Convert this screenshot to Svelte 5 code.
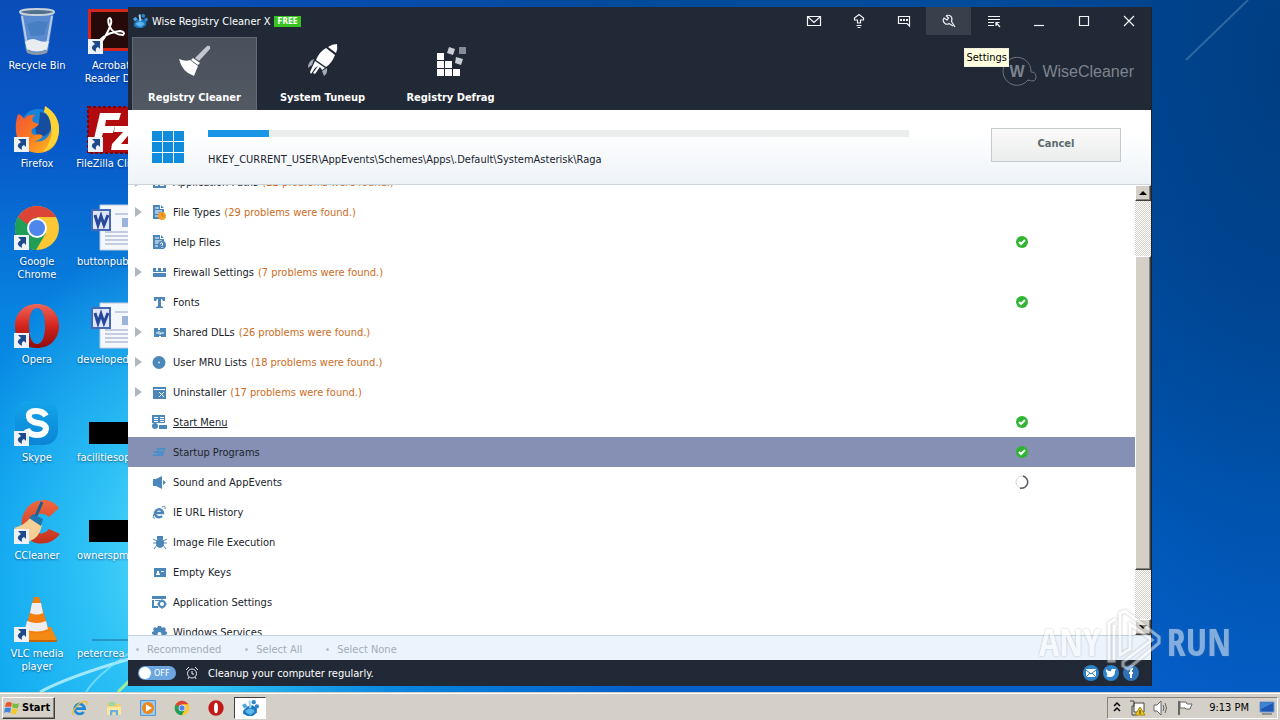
<script lang="ts">
  type Row = {
    name: string;
    icon: string;
    problems?: number;
    status?: 'ok' | 'busy';
    selected?: boolean;
    hovered?: boolean;
  };

  const desktopItems = [
    { label: 'Recycle Bin', icon: 'bin' },
    { label: 'Firefox', icon: 'firefox', shortcut: true },
    { label: 'Google Chrome', icon: 'chrome', shortcut: true },
    { label: 'Opera', icon: 'opera', shortcut: true },
    { label: 'Skype', icon: 'skype', shortcut: true },
    { label: 'CCleaner', icon: 'ccleaner', shortcut: true },
    { label: 'VLC media player', icon: 'vlc', shortcut: true },
    { label: 'Acrobat Reader DC', icon: 'acrobat', shortcut: true },
    { label: 'FileZilla Client', icon: 'filezilla', shortcut: true },
    { label: 'buttonpub', icon: 'word', file: true },
    { label: 'developed', icon: 'word', file: true },
    { label: 'facilitiesop', icon: 'black', file: true },
    { label: 'ownerspm', icon: 'black', file: true },
    { label: 'petercrea', icon: 'line', file: true },
  ];

  const tabs = [
    { label: 'Registry Cleaner', icon: 'broom' },
    { label: 'System Tuneup', icon: 'rocket' },
    { label: 'Registry Defrag', icon: 'blocks' },
  ];
  let activeTab = $state('Registry Cleaner');

  const controls = ['Mail', 'Upgrade', 'Feedback', 'Settings', 'Menu', 'Minimize', 'Maximize', 'Close'];

  const rows: Row[] = [
    { name: 'Application Paths', icon: 'paths', problems: 22 },
    { name: 'File Types', icon: 'types', problems: 29 },
    { name: 'Help Files', icon: 'help', status: 'ok' },
    { name: 'Firewall Settings', icon: 'firewall', problems: 7 },
    { name: 'Fonts', icon: 'fonts', status: 'ok' },
    { name: 'Shared DLLs', icon: 'dll', problems: 26 },
    { name: 'User MRU Lists', icon: 'mru', problems: 18 },
    { name: 'Uninstaller', icon: 'uninstall', problems: 17 },
    { name: 'Start Menu', icon: 'menu', status: 'ok', hovered: true },
    { name: 'Startup Programs', icon: 'startup', status: 'ok', selected: true },
    { name: 'Sound and AppEvents', icon: 'sound', status: 'busy' },
    { name: 'IE URL History', icon: 'ie' },
    { name: 'Image File Execution', icon: 'bug' },
    { name: 'Empty Keys', icon: 'keys' },
    { name: 'Application Settings', icon: 'app' },
    { name: 'Windows Services', icon: 'gear' },
  ];

  const currentKey = 'HKEY_CURRENT_USER\\AppEvents\\Schemes\\Apps\\.Default\\SystemAsterisk\\Raga';
  const progress = 8.7;
  let scheduled = $state(false);

  const launchers = ['Internet Explorer', 'Explorer', 'Media Player', 'Chrome', 'Opera'];
</script>

{#snippet chromeBall()}
  <circle cx="24" cy="24" r="22" fill="#fbc734" />
  <path d="M4.9 13 A22 22 0 0 0 23 46 L33 29 L15 29Z" fill="#1f9e58" />
  <path d="M4.9 13 L15 30 L24 24 V13Z" fill="#1f9e58" />
  <path d="M5 13 A22 22 0 0 1 43.1 13 H24 L14 20Z" fill="#dc4437" />
  <circle cx="24" cy="24" r="10" fill="#fff" />
  <circle cx="24" cy="24" r="8" fill="#4f86ec" />
{/snippet}

{#snippet operaRing()}
  <path
    fill-rule="evenodd"
    fill="url(#opera-red)"
    d="M24 2 C37 2 46 11 46 24 S37 46 24 46 S2 37 2 24 S11 2 24 2Z M24 6 C19 6 16 13 16 24 S19 42 24 42 S32 35 32 24 S29 6 24 6Z"
  />
{/snippet}

{#snippet wiseMark()}
  <path d="M2 11 L6 7 L11 6 L15 9 V13 L11 16 H6 L2 14Z" fill="#1f78bf" />
  <path d="M4 11 L8 9 L12 10 L13 12 L9 15 L5 13Z" fill="#5cb6ec" />
  <path d="M7 2 L9 1 L10 8 L8 9Z" fill="#a9d3ee" />
  <path d="M1 6 L4 4 L6 7 L3 9Z" fill="#4aa6e2" />
  <circle cx="12" cy="3" r="2" fill="#2b86cc" />
  <circle cx="15" cy="7" r="2" fill="#2b86cc" />
{/snippet}

{#snippet desktopIcon(kind: string)}
  <svg viewBox="0 0 48 48" width="48" height="48" aria-hidden="true">
    {#if kind === 'bin'}
      <path d="M7 3 H41 L35 43 Q24 48 13 43Z" fill="#bcd3e6" fill-opacity=".45" />
      <path d="M9 8 L15 42 M39 8 L33 42" stroke="#dfe9f0" stroke-width="2" opacity=".7" />
      <path d="M12 34 Q18 29 24 32 T36 33 L34 41 Q24 46 14 41Z" fill="#e9edf0" />
      <path d="M14 16 L24 13 L35 14 L31 27 L18 28Z" fill="#2c6db4" opacity=".4" />
      <path d="M13 41 Q24 48 35 41 L34 45 Q24 49 14 45Z" fill="#8e9aa4" />
      <ellipse cx="24" cy="4" rx="17" ry="3" fill="#526f8c" stroke="#c8d2da" stroke-width="2" />
    {:else if kind === 'firefox'}
      <circle cx="25" cy="20" r="17" fill="#1783d8" />
      <path d="M27 6 Q38 8 38 22 Q34 33 24 30 L22 22 L26 17Z" fill="#164d9e" />
      <path
        d="M5 8 Q9 9 11 13 Q15 8 22 9 Q18 12 20 16 L26 18 Q23 22 19 23 Q17 28 22 29 Q27 27 30 30 Q25 36 20 35 Q33 38 38 25 Q40 14 33 1 Q46 9 46 24 Q45 47 24 47 Q5 45 3 26 Q2 16 5 8Z"
        fill="url(#fox)"
      />
      <path d="M32 0 Q47 9 46 26 Q44 41 30 46 Q41 33 38 20 Q37 9 31 6Z" fill="#ffd432" />
    {:else if kind === 'chrome'}
      {@render chromeBall()}
    {:else if kind === 'opera'}
      {@render operaRing()}
    {:else if kind === 'skype'}
      <path
        d="M14 1 H31 Q45 2 45 16 V31 Q44 44 31 45 H18 Q3 44 2 30 V14 Q3 2 14 1Z"
        fill="url(#skype-blue)"
        opacity=".9"
      />
      <path
        d="M33 16 Q30 11 23 11 Q15 11 16 17 Q17 22 25 23 Q33 24 33 29 Q32 35 24 35 Q16 35 14 29"
        fill="none"
        stroke="#fff"
        stroke-width="6"
      />
    {:else if kind === 'ccleaner'}
      <path
        d="M46 10 L36 19 Q30 13 22 18 Q14 27 22 34 Q30 38 36 31 L47 36 Q38 48 23 45 Q6 39 9 20 Q15 1 33 2 Q41 3 46 10Z"
        fill="url(#cc-red)"
      />
      <path d="M1 30 Q12 27 17 20 L29 27 Q27 40 15 44 Q9 36 1 30Z" fill="#f4cf96" />
      <path d="M16 20 L20 16 L30 21 L28 28Z" fill="#2275ac" />
      <path d="M23 18 L29 4" stroke="#1c5f92" stroke-width="3" />
    {:else if kind === 'vlc'}
      <path d="M10 31 H38 L44 44 H4Z" fill="#f28a13" />
      <path d="M4 44 H44 V46 H4Z" fill="#c4650a" />
      <path d="M21 1 H26 L36 35 Q24 40 12 35Z" fill="#f47f0e" />
      <path d="M19 7 H28 L30 17 Q24 20 17 17Z M14 25 Q24 29 33 25 L35 33 Q24 38 12 33Z" fill="#eeeef0" />
    {:else if kind === 'acrobat'}
      <path d="M1 1 H48 V43 H1Z" fill="#d3271b" />
      <path d="M4 4 H48 V40 H4Z" fill="#250a09" />
      <path
        d="M13 35 Q18 30 22 21 T23 10 Q20 10 22 17 Q26 27 36 27 Q39 24 33 23 Q21 24 13 32 Q11 35 14 34"
        fill="none"
        stroke="#fff"
        stroke-width="2"
      />
    {:else if kind === 'filezilla'}
      <path d="M1 1 H48 V47 H1Z" fill="#b10b0f" stroke="#7d0407" stroke-width="2" stroke-dasharray="3 2" />
      <path d="M13 7 H34 L32 14 H19 L18 20 H28 L26 27 H16 L13 37 H6Z" fill="#fff" />
      <path d="M28 20 H46 L45 25 L34 38 H44 L43 44 H24 L25 38 L36 26 H27Z" fill="#fff" />
    {:else if kind === 'word'}
      <path d="M11 1 H48 V46 H11Z" fill="#f4f7fb" stroke="#c1cbdb" />
      <path d="M16 28 H48 M16 32 H48 M16 36 H48 M16 40 H48 M26 10 H48" stroke="#93a3c6" />
      <path d="M33 14 H48 V23 H33Z" fill="#9cb4dc" />
      <path d="M3 6 H21 V26 H3Z" fill="#dce6f8" stroke="#4768b2" stroke-width="2" />
      <path d="M6 11 L9 21 L12 12 L15 21 L19 11" fill="none" stroke="#27489a" stroke-width="3" />
    {:else if kind === 'black'}
      <path d="M0 22 H48 V44 H0Z" fill="#000" />
    {:else}
      <path d="M3 44 H48" stroke="#1b6c95" />
    {/if}
  </svg>
{/snippet}

{#snippet tabIcon(kind: string)}
  <svg viewBox="0 0 34 34" width="34" height="34" aria-hidden="true">
    {#if kind === 'broom'}
      <path d="M29 3 Q33 2 32 6 L21 18 L17 15Z" fill="#c4c8ce" />
      <path d="M15 15 L22 20 L20 22 L13 17Z" fill="#fff" />
      <path d="M1 16 Q8 19 12 17 L20 23 L16 33 Q4 29 1 16Z" fill="#fff" />
    {:else if kind === 'rocket'}
      <path d="M31 1 Q32 6 30 10 L22 4 Q26 1 31 1Z" fill="#fff" />
      <path d="M20 5 L29 12 Q26 20 20 24 L10 17 Q13 9 20 5Z" fill="#fff" />
      <path d="M9 18 L19 25 L16 27 L14 24 L9 31 L7 30 L12 23 L9 25 L5 31 L4 29Z" fill="#fff" />
      <path d="M8 16 Q2 18 2 25 L6 22Z M21 25 Q22 30 18 33 L16 28Z" fill="#a4abb8" />
    {:else}
      <path d="M3 10 H10 V17 H3Z M3 18 H10 V25 H3Z M11 18 H18 V25 H11Z M3 26 H10 V33 H3Z M11 26 H18 V33 H11Z M19 26 H26 V33 H19Z" fill="#fff" />
      <path d="M15 4 L21 6 L19 12 L13 10Z M22 14 L29 16 L27 22 L21 20Z" fill="#c9cdd3" />
      <path d="M25 4 H32 V11 H25Z" fill="#858c98" />
    {/if}
  </svg>
{/snippet}

{#snippet controlIcon(kind: string)}
  <svg viewBox="0 0 16 16" width="16" height="16" fill="none" stroke="#f2f4f6" stroke-width="1.2" aria-hidden="true">
    {#if kind === 'Mail'}
      <path d="M1.5 3.5 H14.5 V12.5 H1.5Z M2 4 L8 9.5 L14 4" />
    {:else if kind === 'Upgrade'}
      <path d="M6.5 10 V7 H3.5 V5 L8 1.5 L12.5 5 V7 H9.5 V10Z M5.5 12.5 H10.5 M6.5 14.5 H9.5" />
    {:else if kind === 'Feedback'}
      <path d="M2.5 3.5 H13.5 V13 L11 10.5 H2.5Z" />
      <path d="M4 7 H6 M7 7 H9 M10 7 H12" stroke-width="2" />
    {:else if kind === 'Settings'}
      <path d="M5 2.5 L7.5 5 L6 7 L3 5 Q1 8 4 10.5 Q6 12 8 10.5 L12 13 M14 14 L10.5 8.5 Q12 4 8.5 2.5 Q7 2 5 2.5" />
    {:else if kind === 'Menu'}
      <path d="M2 3.5 H14 M2 6.5 H14 M2 9.5 H8 M2 12.5 H8 M14 14 L10 9.5 M10 13 V9.5 H13.5" />
    {:else if kind === 'Minimize'}
      <path d="M3 12.5 H13" />
    {:else if kind === 'Maximize'}
      <path d="M3.5 3.5 H12.5 V12.5 H3.5Z" />
    {:else}
      <path d="M3 3 L13 13 M13 3 L3 13" />
    {/if}
  </svg>
{/snippet}

{#snippet rowIcon(kind: string)}
  <svg viewBox="0 0 15 15" width="15" height="15" fill="#4b87b9" aria-hidden="true">
    {#if kind === 'paths'}
      <path d="M1 2 H14 V13 H1Z" />
      <path d="M3 9 H6 V11 H3Z M8 9 H12 V11 H8Z" fill="#fff" />
    {:else if kind === 'types' || kind === 'help'}
      <path d="M1 0 H8 V4 H12 V14 H1Z M9 0 L12 3 H9Z" />
      <path d="M3 3 H7 M3 6 H10 M3 8 H7 M3 11 H6" stroke="#fff" />
      {#if kind === 'types'}
        <circle cx="10" cy="11" r="4" fill="#f5a12c" />
        <path d="M10 8 V11 H12" stroke="#d07a10" fill="none" />
      {:else}
        <circle cx="10" cy="10" r="4" />
        <path d="M8 9 Q10 6 11 9 L10 10 V11 M10 12 V13" stroke="#fff" fill="none" />
      {/if}
    {:else if kind === 'firewall'}
      <path d="M1 3 H4 V6 H6 V3 H9 V6 H11 V3 H14 V7 H1Z M1 8 H14 V12 H1Z" />
    {:else if kind === 'fonts'}
      <path d="M2 2 H13 V6 H11 L10 4 H9 V11 L11 12 V13 H4 V12 L6 11 V4 H5 L4 6 H2Z" />
    {:else if kind === 'dll'}
      <path d="M2 3 H6 V5 H8 V3 H14 V12 H9 V11 H7 V12 H2Z" />
      <path d="M4 8 H7 V6 M8 10 V8 H12" stroke="#fff" fill="none" />
    {:else if kind === 'mru'}
      <circle cx="7" cy="7.5" r="6.5" />
      <circle cx="7" cy="7.5" r="1" fill="#d5e6f3" />
    {:else if kind === 'uninstall'}
      <path d="M1 2 H14 V14 H1Z" />
      <path d="M2 4.5 H13 M7 7 L12 12 M12 7 L7 12" stroke="#fff" />
    {:else if kind === 'menu'}
      <path d="M0 0 H13 V8 H0Z M7 10 H15 V14 H7Z" />
      <circle cx="3" cy="11" r="3" />
      <path d="M2 2.5 H6 M8 2.5 H12 M2 4.5 H6 M8 4.5 H12 M2 6.5 H6 M8 6.5 H12" stroke="#fff" />
    {:else if kind === 'startup'}
      <path d="M4 3 H14 L11 11 H0 L2 9 H5 L6 8 H1 L2 6 H6Z" fill="#4f8fc9" />
      <path d="M7 5.5 H12" stroke="#8590b4" />
    {:else if kind === 'sound'}
      <path d="M1 4 H4 L10 1 V14 L4 11 H1Z M11 5 L14 7.5 L11 10Z" />
    {:else if kind === 'ie'}
      <path d="M4 8 H11 A4 4 0 1 0 10 11" fill="none" stroke="#4b87b9" stroke-width="2.5" />
      <path d="M3 13 Q0 14 2 9 M10 2 Q14 0 13 4" fill="none" stroke="#4b87b9" />
    {:else if kind === 'bug'}
      <ellipse cx="8" cy="8" rx="4" ry="5" />
      <path d="M5 1 H11 V4 H5Z" />
      <path d="M1 4 L5 6 M15 4 L11 6 M1 8 H15 M2 14 L5 10 M14 14 L11 10" stroke="#4b87b9" fill="none" />
    {:else if kind === 'keys'}
      <path d="M2 3 H14 V12 H2Z" />
      <path d="M4 10 V9 L5 8 V6 H7 V8 L8 9 V10Z M9 6 H12 V7 H9Z" fill="#fff" />
    {:else if kind === 'app'}
      <path d="M0 1 H14 V4 H0Z M0 5 H2 V11 H6 V13 H0Z M3 5 H8 V6 H3Z" />
      <circle cx="10" cy="9" r="3" fill="none" stroke="#4b87b9" stroke-width="2" />
      <path d="M10 4 V6 M10 12 V14 M5 9 H7 M13 9 H15" stroke="#4b87b9" />
    {:else}
      <path d="M6 1 H9 L10 3 L12 2 L14 4 L13 6 L15 7 V9 L13 10 L14 12 L12 14 H3 L1 12 L2 10 L0 9 V7 L2 6 L1 4 L3 2 L5 3Z" />
      <circle cx="7.5" cy="9" r="2" fill="#fff" />
    {/if}
  </svg>
{/snippet}

<svg class="defs" width="0" height="0" aria-hidden="true">
  <defs>
    <linearGradient id="opera-red" x1="0" y1="0" x2="0" y2="1">
      <stop offset="0" stop-color="#f0665a" />
      <stop offset=".5" stop-color="#d3241c" />
      <stop offset="1" stop-color="#8f0c0c" />
    </linearGradient>
    <linearGradient id="fox" x1="0" y1="0" x2="1" y2="1">
      <stop offset="0" stop-color="#ee5040" />
      <stop offset=".5" stop-color="#fb7a1e" />
      <stop offset="1" stop-color="#ffc928" />
    </linearGradient>
    <linearGradient id="skype-blue" x1="0" y1="0" x2="0" y2="1">
      <stop offset="0" stop-color="#12a5ea" />
      <stop offset="1" stop-color="#0a80d4" />
    </linearGradient>
    <linearGradient id="cc-red" x1="0" y1="0" x2="0" y2="1">
      <stop offset="0" stop-color="#f0683f" />
      <stop offset="1" stop-color="#c4301c" />
    </linearGradient>
  </defs>
</svg>

<div class="screen">
  <main class="desktop">
    <svg class="streaks" viewBox="0 0 1280 692" preserveAspectRatio="none" fill="none" aria-hidden="true">
      <path d="M40 692 Q80 670 200 640" stroke="#bdf3ff" stroke-width="3" opacity=".8" />
      <path d="M86 692 Q100 670 150 640" stroke="#8fe6fb" stroke-width="2" opacity=".7" />
      <path d="M118 692 L134 676" stroke="#a0ee9a" stroke-width="3" />
      <path d="M1186 60 L1248 0" stroke="#6f9fc8" stroke-width="2" opacity=".4" />
    </svg>

    <ul class="shortcuts">
      {#each desktopItems as item (item.label)}
        <li class:file={item.file}>
          <span class="picture">
            {@render desktopIcon(item.icon)}
            {#if item.shortcut}
              <svg class="arrow" viewBox="0 0 15 15" width="15" height="15" aria-hidden="true">
                <path d="M0 0 H15 V15 H0Z" fill="#eef2f6" />
                <path d="M4 2 H12 V10 L10 8 Q7 9 8 13 Q0 9 7 5Z" fill="#1d4a8c" />
              </svg>
            {/if}
          </span>
          <span class="label">{item.label}</span>
        </li>
      {/each}
    </ul>

    <section class="window">
      <header class="top">
        <div class="titlebar">
          <svg viewBox="0 0 17 17" width="16" height="16" aria-hidden="true">{@render wiseMark()}</svg>
          <h1>Wise Registry Cleaner X</h1>
          <span class="free">FREE</span>
          <div class="controls">
            {#each controls as control (control)}
              <button class:hot={control === 'Settings'} aria-label={control}>
                {@render controlIcon(control)}
              </button>
            {/each}
          </div>
        </div>

        <div class="toolbar">
          <nav class="tabs">
            {#each tabs as tab (tab.label)}
              <button class:active={activeTab === tab.label} onclick={() => (activeTab = tab.label)}>
                {@render tabIcon(tab.icon)}
                <span>{tab.label}</span>
              </button>
            {/each}
          </nav>
          <div class="brand">
            <svg viewBox="0 0 36 32" width="36" height="32" fill="none" aria-hidden="true">
              <path d="M26 25 A14 14 0 1 1 29 17 Q34 17 34 22 Q34 28 26 25" stroke="#6d7480" />
            </svg>
            <b>W</b>
            <span>WiseCleaner</span>
          </div>
        </div>
        <span class="tooltip" role="tooltip">Settings</span>
      </header>

      <div class="scan">
        <svg viewBox="0 0 32 32" width="32" height="32" fill="#0f8ddc" aria-hidden="true">
          {#each [0, 11, 22] as y}
            {#each [0, 11, 22] as x}
              <rect {x} {y} width="10" height="10" />
            {/each}
          {/each}
        </svg>
        <div class="scan-info">
          <div class="track" role="progressbar" aria-label="Scan progress" aria-valuenow={progress}>
            <div class="fill" style:width="{progress}%"></div>
          </div>
          <p>{currentKey}</p>
        </div>
        <button class="cancel">Cancel</button>
      </div>

      <div class="results">
        <ul class="rows">
          {#each rows as row (row.name)}
            <li class:selected={row.selected} class:hovered={row.hovered}>
              <span class="expander" class:shown={row.problems}></span>
              {@render rowIcon(row.icon)}
              <span class="name">{row.name}</span>
              {#if row.problems}
                <span class="problems">({row.problems} problems were found.)</span>
              {/if}
              <span class="status">
                {#if row.status === 'ok'}
                  <svg viewBox="0 0 12 12" width="12" height="12" aria-label="Done">
                    <circle cx="6" cy="6" r="6" fill="#2fb52f" />
                    <path d="M3 6 L5 8 L9 4" fill="none" stroke="#fff" stroke-width="2" />
                  </svg>
                {:else if row.status === 'busy'}
                  <svg viewBox="0 0 14 14" width="14" height="14" fill="none" aria-label="Scanning">
                    <circle cx="7" cy="7" r="6" stroke="#d2d4d8" />
                    <path d="M8 1 A6 6 0 0 1 5 13" stroke="#585c66" stroke-width="1.5" />
                  </svg>
                {/if}
              </span>
            </li>
          {/each}
        </ul>
        <div class="scrollbar">
          <button aria-label="Scroll up"><span class="up"></span></button>
          <div class="rail"><div class="thumb"></div></div>
          <button aria-label="Scroll down"><span class="down"></span></button>
        </div>
      </div>

      <div class="choices">
        <button disabled>Recommended</button>
        <button disabled>Select All</button>
        <button disabled>Select None</button>
      </div>

      <footer class="bottom">
        <label class="toggle">
          <input type="checkbox" bind:checked={scheduled} aria-label="Cleanup your computer regularly" />
          <span>{scheduled ? 'ON' : 'OFF'}</span>
        </label>
        <svg viewBox="0 0 14 14" width="14" height="14" fill="none" stroke="#e8ebef" aria-hidden="true">
          <circle cx="7" cy="7.5" r="4.5" />
          <path d="M7 5 V8 H9 M1 4 L4 1 M13 4 L10 1 M3 13 L4 11 M11 13 L10 11" />
        </svg>
        <span>Cleanup your computer regularly.</span>
        <div class="social">
          <a href="#mail" aria-label="Mail">
            <svg viewBox="0 0 16 16" width="16" height="16">
              <circle cx="8" cy="8" r="8" fill="#2e82ca" />
              <path d="M3 4 H13 V12 H3Z" fill="#fff" />
              <path d="M3 5 L8 9 L13 5 M3 12 L7 8 M13 12 L9 8" stroke="#2e82ca" fill="none" />
            </svg>
          </a>
          <a href="#twitter" aria-label="Twitter">
            <svg viewBox="0 0 16 16" width="16" height="16">
              <circle cx="8" cy="8" r="8" fill="#2e82ca" />
              <path d="M3 4 Q6 7 8 6 Q8 3 11 4 L13 4 L12 6 Q12 12 7 12 Q4 12 3 11 L5 10 Q3 9 4 8 Q2 6 3 4Z" fill="#fff" />
            </svg>
          </a>
          <a href="#facebook" aria-label="Facebook">
            <svg viewBox="0 0 16 16" width="16" height="16">
              <circle cx="8" cy="8" r="8" fill="#2e72b8" />
              <path d="M10 4 H9 Q8 4 8 6 V13 M6 8 H10" stroke="#fff" stroke-width="2" fill="none" />
            </svg>
          </a>
        </div>
      </footer>
    </section>

    <div class="watermark">
      <span>ANY</span>
      <svg viewBox="0 0 56 64" width="56" height="64" fill="none" stroke="#fff" stroke-width="3" aria-hidden="true">
        <path d="M10 10 L3 14 V52 H8 V17 H10" />
        <path d="M14 18 V4 L19 2 L53 28 V34 L22 60 L17 57 V53 L46 31 L24 15 V40 L14 46Z" />
      </svg>
      <span>RUN</span>
    </div>
  </main>

  <footer class="taskbar">
    <button class="start">
      <svg viewBox="0 0 16 16" width="16" height="16" aria-hidden="true">
        <path d="M2 3 Q5 1 8 3 L7 7 Q4 6 1 7Z" fill="#e8552a" />
        <path d="M9 3 Q12 5 15 3 L14 8 Q11 9 8 7Z" fill="#7cba3c" />
        <path d="M1 8 Q4 7 7 8 L6 13 Q3 11 0 13Z" fill="#3f86dd" />
        <path d="M8 8 Q11 10 14 9 L12 14 Q9 15 7 13Z" fill="#f7c52b" />
      </svg>
      Start
    </button>
    <div class="launchers">
      {#each launchers as app (app)}
        <button aria-label={app}>
          <svg viewBox="0 0 48 48" width="16" height="16">
            {#if app === 'Internet Explorer'}
              <path d="M12 26 H38 A15 15 0 1 0 35 36" fill="none" stroke="#2088d8" stroke-width="8" />
              <path d="M7 44 Q-2 42 8 26 Q22 6 38 4 Q48 3 44 14" fill="none" stroke="#edbe2e" stroke-width="4" />
            {:else if app === 'Explorer'}
              <path d="M4 8 H20 L24 12 H44 V42 H4Z" fill="#efcf70" />
              <path d="M8 6 H28 V18 H8Z" fill="#a3d5a2" />
              <path d="M3 20 H45 V44 H3Z" fill="#f9e69f" />
              <path d="M12 30 H36 V46 H29 V37 H19 V46 H12Z" fill="#6db0e2" />
            {:else if app === 'Media Player'}
              <path d="M1 1 H47 V47 H1Z" fill="#9bcaf0" stroke="#4a90c9" stroke-width="3" />
              <circle cx="24" cy="24" r="18" fill="#f0861a" />
              <path d="M18 13 L36 24 L18 35Z" fill="#fff" />
            {:else if app === 'Chrome'}
              {@render chromeBall()}
            {:else}
              <circle cx="24" cy="24" r="23" fill="#c21a18" />
              <ellipse cx="24" cy="24" rx="6" ry="16" fill="#fff" />
            {/if}
          </svg>
        </button>
      {/each}
      <button class="running" aria-label="Wise Registry Cleaner">
        <svg viewBox="0 0 17 17" width="18" height="18">{@render wiseMark()}</svg>
      </button>
    </div>
    <div class="tray">
      <svg viewBox="0 0 8 14" width="8" height="14" fill="none" stroke="#000" stroke-width="1.5" aria-hidden="true">
        <path d="M1 5 L4 2 L7 5 M1 10 L4 7 L7 10" />
      </svg>
      <svg viewBox="0 0 16 16" width="16" height="16" aria-hidden="true">
        <path d="M5 3 H15 V12 H5Z" fill="#fff" stroke="#444" />
        <path d="M1 1 H5 V6 H3 V15 H8" fill="none" stroke="#444" />
        <path d="M11 7 L16 15 H6Z" fill="#f5cc1d" stroke="#a58400" />
        <path d="M11 10 V14" stroke="#222" />
      </svg>
      <svg viewBox="0 0 16 16" width="16" height="16" fill="none" stroke="#666" aria-hidden="true">
        <path d="M1 5 H4 L8 1 V15 L4 11 H1Z" fill="#fff" />
        <path d="M10 5 Q12 8 10 11 M12 3 Q15 8 12 13" />
      </svg>
      <svg viewBox="0 0 16 16" width="16" height="16" aria-hidden="true">
        <path d="M2 1 V15" stroke="#666" stroke-width="2" />
        <path d="M3 2 H9 L10 4 H15 L13 9 H9 L8 8 H3Z" fill="#fff" stroke="#666" />
      </svg>
      <time>9:13 PM</time>
      <svg viewBox="0 0 16 16" width="16" height="16" aria-hidden="true">
        <path d="M1 2 H15 V12 H1Z" fill="#1c58b4" stroke="#6e97cc" />
        <path d="M2 3 H14 L2 9Z" fill="#3d83d8" />
        <path d="M3 14 H13" stroke="#555" />
      </svg>
    </div>
  </footer>
</div>

<style>
  :global(body) {
    margin: 0;
  }

  .screen {
    display: flex;
    flex-direction: column;
    min-height: 100vh;
    font-family: 'DejaVu Sans Condensed', 'DejaVu Sans', sans-serif;
    font-size: 11px;
    line-height: 13px;
    color: #20242c;
  }

  .defs {
    position: absolute;
  }

  button {
    font: inherit;
    color: inherit;
    padding: 0;
    border: 0;
    background: none;
  }

  ul {
    list-style: none;
    margin: 0;
    padding: 0;
  }

  svg {
    display: block;
    flex: none;
  }

  .desktop {
    position: relative;
    flex: 1;
    overflow: hidden;
    background:
      linear-gradient(90deg, transparent 15%, #0560cc 50%, transparent 90%) 0 100% / 100% 8px no-repeat,
      linear-gradient(90deg, transparent 15%, #004a9a 50%, transparent 90%) 0 0 / 100% 7px no-repeat,
      radial-gradient(ellipse 240px 330px at 190px 560px, #5adffb 0%, rgb(52 200 247 / 80%) 45%, transparent 100%),
      linear-gradient(180deg, #0a4db8 0%, #0758c8 20%, #0783e0 45%, #079cee 75%, #0aa4ee 100%) 0 0 / 50% 100% no-repeat,
      radial-gradient(ellipse 340px 700px at 100% 10%, #003e82 0%, transparent 100%),
      linear-gradient(180deg, #004c9e 0%, #0053b0 40%, #0060c8 75%, #0560cc 100%);
  }

  .streaks {
    position: absolute;
    width: 100%;
    height: 100%;
  }

  .shortcuts {
    display: grid;
    grid-auto-flow: column;
    grid-template-rows: repeat(6, 98px) auto;
    grid-auto-columns: 74px;
    padding-top: 8px;
    width: 148px;
    position: relative;
    color: #fff;
    text-align: center;
    text-shadow: 0 1px 2px rgb(0 30 80 / 60%);
  }

  .shortcuts li {
    display: flex;
    flex-direction: column;
    align-items: center;
    gap: 3px;
  }

  .shortcuts .file {
    align-items: stretch;
    text-align: left;
    padding-left: 3px;
  }

  .file .picture {
    align-self: center;
  }

  .picture {
    position: relative;
  }

  .arrow {
    position: absolute;
    left: 1px;
    bottom: 2px;
  }

  .label {
    max-width: 70px;
  }

  .window {
    position: absolute;
    top: 7px;
    bottom: 6px;
    left: 10%;
    right: 10%;
    display: flex;
    flex-direction: column;
    background: #fff;
    border-right: 1px solid #1b2330;
    box-sizing: border-box;
  }

  .top {
    position: relative;
    background: #212936;
    color: #fff;
  }

  .titlebar {
    display: flex;
    align-items: center;
    height: 28px;
    padding-left: 4px;
    gap: 4px;
  }

  h1 {
    font: inherit;
    margin: 0;
  }

  .free {
    background: #35c51e;
    font-size: 8px;
    font-weight: bold;
    line-height: 11px;
    padding: 0 3px;
  }

  .controls {
    display: flex;
    align-self: stretch;
    margin-left: auto;
  }

  .controls button {
    display: grid;
    place-items: center;
    width: 45px;
  }

  .controls .hot {
    background: #38404c;
  }

  .toolbar {
    display: flex;
    justify-content: space-between;
    align-items: flex-start;
    padding: 2px 17px 0 4px;
  }

  .tabs {
    display: flex;
    gap: 3px;
  }

  .tabs button {
    display: flex;
    flex-direction: column;
    align-items: center;
    gap: 14px;
    box-sizing: border-box;
    width: 125px;
    height: 73px;
    padding-top: 5px;
    border: 1px solid transparent;
    border-bottom: 0;
    font-weight: bold;
  }

  .tabs .active {
    background: linear-gradient(#48505b, #525963);
    border-color: #626973;
  }

  .brand {
    position: relative;
    display: flex;
    align-items: center;
    gap: 4px;
    margin-top: 18px;
    color: #7d838e;
    font-family: 'Liberation Sans', Arial, sans-serif;
    font-size: 16px;
  }

  .brand b {
    position: absolute;
    left: 7px;
  }

  .tooltip {
    position: absolute;
    right: 142px;
    top: 41px;
    padding: 2px 1px;
    border: 1px solid #f2f0dc;
    background: #ffffe1;
    color: #000;
  }

  .scan {
    display: flex;
    align-items: flex-start;
    box-sizing: border-box;
    height: 75px;
    padding: 18px 30px 0 24px;
    background: linear-gradient(#fff 30%, #eef3f8);
    border-bottom: 1px solid #cdd4da;
  }

  .scan > svg {
    margin-top: 3px;
  }

  .scan-info {
    flex: 1;
    margin: 2px 82px 0 24px;
  }

  .track {
    height: 7px;
    background: #ebecec;
  }

  .fill {
    height: 100%;
    background: #1b96e6;
  }

  .scan p {
    margin: 16px 0 0;
  }

  .cancel {
    width: 130px;
    height: 34px;
    padding-bottom: 4px;
    border: 1px solid #c5cacd;
    background: linear-gradient(#fafafa, #ebecec);
    color: #5e6b6b;
    font-weight: bold;
  }

  .results {
    flex: 1;
    display: flex;
    min-height: 0;
  }

  .rows {
    flex: 1;
    overflow: hidden;
  }

  .rows li {
    display: flex;
    align-items: center;
    height: 30px;
    padding: 0 106px 0 7px;
  }

  /* list is scrolled part of a row down */
  .rows li:first-child {
    margin-top: -18px;
  }

  .rows .selected {
    background: #8590b4;
  }

  .hovered .name {
    text-decoration: underline;
  }

  .expander {
    width: 7px;
    margin-right: 10px;
  }

  .expander.shown {
    box-sizing: border-box;
    border: 5px solid transparent;
    border-left: 7px solid #b0b7bf;
    border-right: 0;
  }

  .name {
    margin-left: 6px;
  }

  .problems {
    margin-left: 4px;
    color: #cb6d1e;
  }

  .status {
    display: grid;
    place-items: center;
    width: 14px;
    margin-left: auto;
  }

  .scrollbar {
    display: flex;
    flex-direction: column;
    width: 16px;
  }

  .scrollbar button,
  .thumb {
    box-sizing: border-box;
    background: #d4d0c8;
    border: 1px solid;
    border-color: #fff #404040 #404040 #fff;
    box-shadow: inset -1px -1px #87847e;
  }

  .scrollbar button {
    display: grid;
    place-items: center;
    height: 16px;
  }

  .up,
  .down {
    border: 4px solid transparent;
    border-top-width: 0;
    border-bottom: 4px solid #000;
  }

  .down {
    transform: rotate(180deg);
  }

  .rail {
    flex: 1;
    background: repeating-conic-gradient(#d4d0c8 0 25%, #fff 0 50%) 0 0 / 2px 2px;
  }

  .thumb {
    height: 75%;
    margin-top: 55px;
  }

  .choices {
    display: flex;
    align-items: center;
    gap: 24px;
    box-sizing: border-box;
    height: 25px;
    padding: 2px 8px 0;
    background: #ebf3fd;
    border-top: 1px solid #c3d0df;
    color: #a5adb6;
  }

  .choices button {
    display: flex;
    align-items: center;
    gap: 8px;
  }

  .choices button::before {
    content: '';
    width: 3px;
    height: 3px;
    border-radius: 50%;
    background: #b9c1ca;
  }

  .bottom {
    display: flex;
    align-items: center;
    gap: 9px;
    height: 26px;
    padding: 0 12px 0 10px;
    background: #212936;
    color: #fff;
  }

  .toggle {
    display: flex;
    align-items: center;
    gap: 3px;
    box-sizing: border-box;
    width: 38px;
    height: 14px;
    padding: 0 1px;
    border-radius: 7px;
    background: #6ca5e0;
    font-size: 9px;
  }

  .toggle input {
    appearance: none;
    width: 12px;
    height: 12px;
    margin: 0;
    border-radius: 50%;
    background: #fff;
  }

  .social {
    display: flex;
    gap: 4px;
    margin-left: auto;
  }

  .watermark {
    position: absolute;
    right: 49px;
    bottom: 19px;
    display: flex;
    align-items: center;
    gap: 5px;
    font-family: 'Open Sans Condensed', 'Noto Sans ExtraCondensed', 'Noto Sans Condensed', 'Roboto Condensed', 'Liberation Sans', sans-serif;
    font-size: 38px;
    font-weight: 300;
    line-height: 48px;
    color: #fff;
    opacity: 0.5;
    text-shadow: 0 0 2px #777;
    pointer-events: none;
  }

  .watermark svg {
    filter: drop-shadow(0 0 1px #777);
  }

  .taskbar {
    display: flex;
    align-items: center;
    box-sizing: border-box;
    height: 28px;
    padding: 4px 2px 2px;
    background: #d4d0c8;
    border-top: 1px solid #d4d0c8;
    box-shadow: inset 0 1px #fff;
    color: #000;
  }

  .start {
    display: flex;
    align-items: center;
    gap: 2px;
    height: 22px;
    padding: 0 4px 0 1px;
    border: 1px solid;
    border-color: #fff #404040 #404040 #fff;
    box-shadow: inset -1px -1px #87847e;
    font-weight: bold;
  }

  .launchers {
    display: flex;
    align-items: center;
    gap: 2px;
    margin-left: 9px;
  }

  .launchers button {
    display: grid;
    place-items: center;
    width: 32px;
    height: 22px;
  }

  .launchers .running {
    box-sizing: border-box;
    border: 1px solid;
    border-color: #404040 #fff #fff #404040;
    background: #fff;
  }

  .tray {
    display: flex;
    align-items: center;
    gap: 8px;
    box-sizing: border-box;
    height: 22px;
    margin-left: auto;
    padding: 0 2px 0 5px;
    border: 1px solid;
    border-color: #87847e #fff #fff #87847e;
  }

  time {
    margin: 0 2px 0 8px;
  }
</style>
